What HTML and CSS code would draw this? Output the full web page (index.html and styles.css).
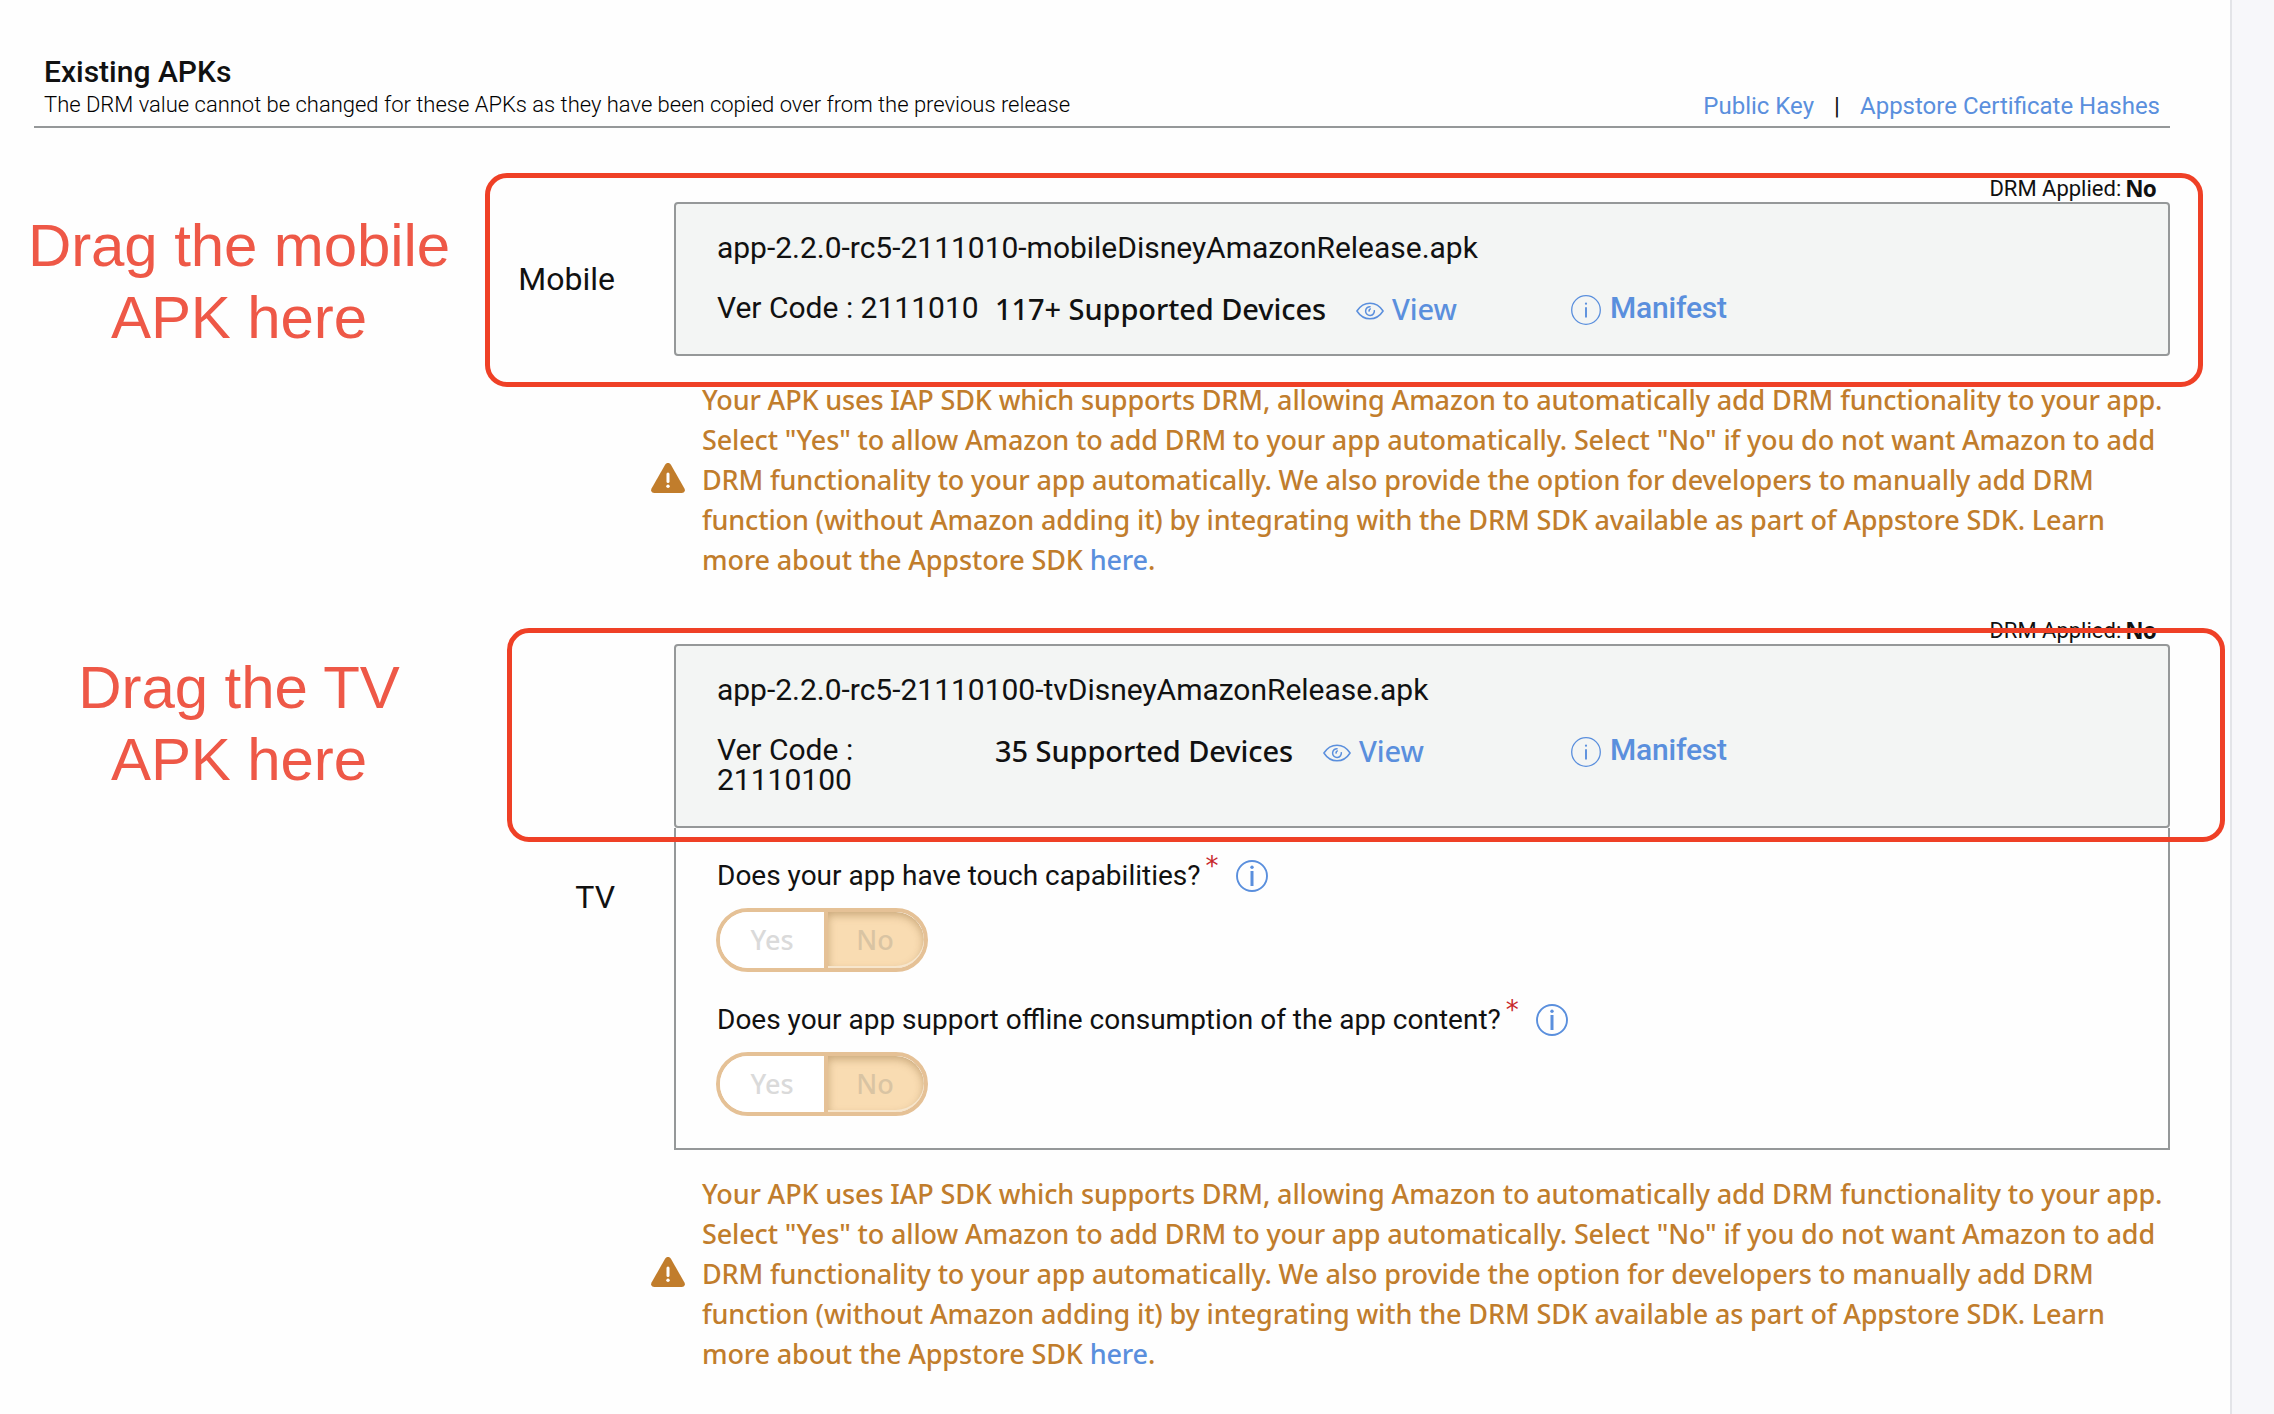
FILE: index.html
```html
<!DOCTYPE html>
<html lang="en">
<head>
<meta charset="utf-8">
<title>Existing APKs</title>
<link rel="stylesheet" href="styles.css">
</head>
<body>
<svg class="sprite" aria-hidden="true">
  <symbol id="eye" viewBox="0 0 28 18" fill="none" stroke="currentColor">
    <path d="M.9 9C4 4.200 8.500 1.200 14 1.200S24 4.200 27.100 9C24 13.800 19.500 16.800 14 16.800S4 13.800.9 9Z" stroke-width="1.500" stroke-linejoin="round"/>
    <path d="M14.600 4.700A4.400 4.400 0 1 0 18.300 8.200M14.800 6.600Q12.600 7.400 13.200 9.600" stroke-width="1.500"/>
  </symbol>
  <symbol id="info" viewBox="0 0 30 30" fill="none" stroke="currentColor">
    <circle cx="15" cy="15" r="14.300" stroke-width="1.300"/>
    <path d="M15 12.200V22.400" stroke-width="1.900"/>
    <circle cx="15" cy="8.700" r="1.100" fill="currentColor" stroke="none"/>
  </symbol>
  <symbol id="help" viewBox="0 0 32 32" fill="none" stroke="currentColor">
    <circle cx="16" cy="16" r="15" stroke-width="1.900"/>
    <path d="M16 11V26" stroke-width="3"/>
    <circle cx="16" cy="7.300" r="1.700" fill="currentColor" stroke="none"/>
  </symbol>
  <symbol id="warning" viewBox="0 0 34 30">
    <path d="M17 0C18.300 0 19.200.6 19.900 1.800L33.300 25.200C34.700 27.700 33.400 30 30.600 30H3.400C.6 30-.7 27.700.7 25.200L14.100 1.800C14.800.6 15.700 0 17 0Z" fill="currentColor"/>
    <path d="M17 11V18.500" stroke="#fff" stroke-width="3" stroke-linecap="round"/>
    <circle cx="17" cy="23.300" r="1.700" fill="#fff"/>
  </symbol>
</svg>

<main class="page">
  <header class="header">
    <div>
      <h1 class="title">Existing APKs</h1>
      <p class="subtitle">The DRM value cannot be changed for these APKs as they have been copied over from the previous release</p>
    </div>
    <nav class="links"><a class="link">Public Key</a><span class="bar">|</span><a class="link">Appstore Certificate Hashes</a></nav>
  </header>

  <section class="apk">
    <div class="drm">DRM Applied: <b class="drm-value">No</b></div>
    <div class="row">
      <div class="device">Mobile</div>
      <div class="card">
        <div class="file">app-2.2.0-rc5-2111010-mobileDisneyAmazonRelease.apk</div>
        <div class="details">
          <div>Ver Code : 2111010</div>
          <div class="supported">117+ Supported Devices<a class="link view"><svg class="eye"><use href="#eye"/></svg>View</a></div>
          <a class="link manifest"><svg class="info"><use href="#info"/></svg>Manifest</a>
        </div>
      </div>
    </div>
    <div class="notice">
      <svg class="warning"><use href="#warning"/></svg>
      <p class="notice-text">Your APK uses IAP SDK which supports DRM, allowing Amazon to automatically add DRM functionality to your app.<br>Select "Yes" to allow Amazon to add DRM to your app automatically. Select "No" if you do not want Amazon to add<br>DRM functionality to your app automatically. We also provide the option for developers to manually add DRM<br>function (without Amazon adding it) by integrating with the DRM SDK available as part of Appstore SDK. Learn<br>more about the Appstore SDK <a class="link">here</a>.</p>
    </div>
  </section>

  <section class="apk">
    <div class="drm">DRM Applied: <b class="drm-value">No</b></div>
    <div class="row">
      <div class="device">TV</div>
      <div>
        <div class="card">
          <div class="file">app-2.2.0-rc5-21110100-tvDisneyAmazonRelease.apk</div>
          <div class="details">
            <div>Ver Code :<br>21110100</div>
            <div class="supported">35 Supported Devices<a class="link view"><svg class="eye"><use href="#eye"/></svg>View</a></div>
            <a class="link manifest"><svg class="info"><use href="#info"/></svg>Manifest</a>
          </div>
        </div>
        <div class="panel">
          <div class="question">Does your app have touch capabilities?<span class="required">*</span><svg class="help"><use href="#help"/></svg></div>
          <div class="toggle"><span class="yes">Yes</span><span class="no">No</span></div>
          <div class="question">Does your app support offline consumption of the app content?<span class="required">*</span><svg class="help"><use href="#help"/></svg></div>
          <div class="toggle"><span class="yes">Yes</span><span class="no">No</span></div>
        </div>
      </div>
    </div>
    <div class="notice">
      <svg class="warning"><use href="#warning"/></svg>
      <p class="notice-text">Your APK uses IAP SDK which supports DRM, allowing Amazon to automatically add DRM functionality to your app.<br>Select "Yes" to allow Amazon to add DRM to your app automatically. Select "No" if you do not want Amazon to add<br>DRM functionality to your app automatically. We also provide the option for developers to manually add DRM<br>function (without Amazon adding it) by integrating with the DRM SDK available as part of Appstore SDK. Learn<br>more about the Appstore SDK <a class="link">here</a>.</p>
    </div>
  </section>
</main>

<div class="outline outline-mobile"></div>
<div class="outline outline-tv"></div>
<div class="callout callout-mobile">Drag the mobile<br>APK here</div>
<div class="callout callout-tv">Drag the TV<br>APK here</div>
</body>
</html>
```
FILE: styles.css
```css
* { box-sizing: border-box; }
body {
  margin: 0;
  position: relative;
  height: 1414px;
  overflow: hidden;
  background: #f7f7fa;
  color: #111;
  font-family: Roboto, sans-serif;
}
h1, p { margin: 0; }
svg { display: block; flex: none; }
.sprite { position: absolute; width: 0; height: 0; }
.page {
  width: 2232px;
  height: 1414px;
  padding: 56px 60px 0 34px;
  background: #fefefe;
  border-right: 2px solid #e3e4e8;
}
.link { color: #5a8fdd; }

.header {
  display: flex;
  justify-content: space-between;
  align-items: flex-end;
  padding: 0 10px 6px;
  border-bottom: 2px solid #959899;
}
.title { font-size: 30px; font-weight: 500; line-height: 32px; }
.subtitle { margin-top: 2px; font-size: 22px; font-weight: 300; line-height: 30px; letter-spacing: -.01px; color: #000; }
.links { display: flex; font-size: 24px; line-height: 28px; }
.bar { width: 46px; text-align: center; }

.apk + .apk { margin-top: 38px; }
.drm {
  display: flex;
  justify-content: flex-end;
  gap: 4px;
  padding-right: 14px;
  font-size: 22px;
  line-height: 26px;
}
.header + .apk { padding-top: 48px; }
.drm-value { font: 700 22.500px/26px "Noto Sans", sans-serif; letter-spacing: -.8px; }
.row {
  display: grid;
  grid-template-columns: 581px 1496px;
  column-gap: 59px;
  align-items: center;
}
.device { text-align: right; font-size: 32px; line-height: 36px; }
.card {
  padding: 29px 40px 31px 41px;
  border: 2px solid #959899;
  border-radius: 4px;
  background: #f3f5f4;
  font-size: 30px;
  line-height: 30px;
}
.file { letter-spacing: -.02px; }
.details {
  display: grid;
  grid-template-columns: 278px 576px auto;
  justify-content: start;
  align-items: start;
  margin-top: 30px;
}
.supported {
  display: flex;
  margin: 1px 0 -1px;
  font: 500 29px/30px "Noto Sans", sans-serif;
  letter-spacing: -.07px;
}
.view { display: flex; align-items: center; gap: 8px; margin-left: 30px; }
.eye { width: 28px; height: 18px; margin-top: 4px; }
.manifest { display: flex; gap: 9px; font-weight: 500; letter-spacing: -.2px; }
.info { width: 30px; height: 30px; margin: 2px 0 -2px; }

.panel {
  padding: 32px 40px;
  border: 2px solid #959899;
  border-top: 0;
}
.question { display: flex; padding-left: 1px; font-size: 28px; line-height: 32px; }
.required {
  margin: -7px 17px 0 5px;
  color: #c8282b;
  font: 26px/26px "DejaVu Sans", sans-serif;
}
.help { width: 32px; height: 32px; color: #5a8fdd; }
.toggle {
  display: flex;
  width: 212px;
  height: 64px;
  margin-top: 16px;
  border: 4px solid #e5c196;
  border-radius: 32px;
  overflow: hidden;
  font: 500 27px/56px "Noto Sans", sans-serif;
  text-align: center;
}
.toggle + .question { margin-top: 32px; }
.yes { width: 108px; border-right: 4px solid #e5c196; background: #fff; color: #dadada; }
.no {
  flex: 1;
  border-radius: 0 28px 28px 0;
  padding-right: 2px;
  background: #f9dcb2;
  color: #d9c4a3;
  box-shadow: inset 0 -2px 0 #f7e6cd, inset 0 3px 9px rgba(130, 90, 40, .4);
}

.notice { display: flex; align-items: center; gap: 17px; margin: 24px 0 0 617px; color: #c17d2c; }
.warning { width: 34px; height: 30px; margin-bottom: 4px; }
.notice-text {
  font: 500 27px/40px "Noto Sans", sans-serif;
  letter-spacing: -.135px;
  white-space: nowrap;
}

.outline {
  position: absolute;
  width: 1718px;
  height: 214px;
  border: 5px solid #ef4026;
  border-radius: 22px;
}
.outline-mobile { left: 485px; top: 173px; }
.outline-tv { left: 507px; top: 628px; }
.callout {
  position: absolute;
  left: 20px;
  width: 438px;
  color: #ee5847;
  font: 60px/72px "Liberation Sans", sans-serif;
  letter-spacing: -.1px;
  text-align: center;
}
.callout-mobile { top: 210px; }
.callout-tv { top: 652px; }
```
